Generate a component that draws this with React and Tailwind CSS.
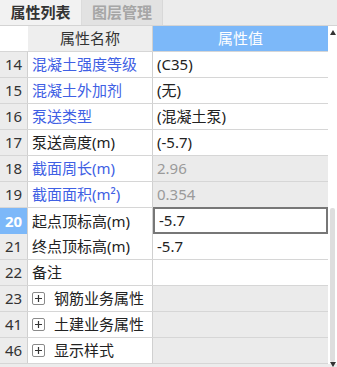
const rows = [
  { no: "14", name: "混凝土强度等级", value: "(C35)", blue: true },
  { no: "15", name: "混凝土外加剂", value: "(无)", blue: true },
  { no: "16", name: "泵送类型", value: "(混凝土泵)", blue: true },
  { no: "17", name: "泵送高度(m)", value: "(-5.7)" },
  { no: "18", name: "截面周长(m)", value: "2.96", blue: true, readonly: true },
  { no: "19", name: "截面面积(m²)", value: "0.354", blue: true, readonly: true },
  { no: "20", name: "起点顶标高(m)", value: "-5.7", selected: true },
  { no: "21", name: "终点顶标高(m)", value: "-5.7" },
  { no: "22", name: "备注", value: "" },
  { no: "23", name: "钢筋业务属性", group: true },
  { no: "41", name: "土建业务属性", group: true },
  { no: "46", name: "显示样式", group: true },
];

const PlusBox = () => (
  <span className="flex h-[13px] w-[13px] items-center justify-center rounded-[2px] border border-[#8a8a8a] bg-white">
    <svg width="9" height="9" viewBox="0 0 9 9">
      <path d="M4.5 1v7M1 4.5h7" stroke="#333" strokeWidth="1.2" />
    </svg>
  </span>
);

const Row = ({ row }) => {
  const nameColor = row.blue ? "text-[#4060e4]" : "text-[#222]";
  const valueBg = row.readonly || row.group ? "bg-[#ebebeb]" : "bg-white";
  return (
    <div className="grid h-[26px] grid-cols-[28px_125px_175px] border-b border-[#d6d6d6]">
      <div
        className={`flex items-center justify-center border-r border-[#d0d0d0] ${
          row.selected ? "bg-[#7cb8f9] font-bold text-white" : "bg-[#ececec] text-[#333]"
        }`}
      >
        {row.no}
      </div>
      <div className={`flex items-center gap-[9px] border-r border-[#d0d0d0] bg-white pl-[4px] ${nameColor}`}>
        {row.group && <PlusBox />}
        <span>{row.name}</span>
      </div>
      <div
        className={`flex items-center pl-[4px] ${
          row.selected ? "border-2 border-[#777] bg-white -mt-[1px] h-[27px] pl-[3px]" : valueBg
        } ${row.readonly ? "text-[#9a9a9a]" : "text-[#222]"}`}
      >
        {row.value}
      </div>
    </div>
  );
};

export default function App() {
  return (
    <div
      className="relative h-[367px] w-[337px] overflow-hidden bg-[#ececec] text-[15px] leading-none"
      style={{ fontFamily: '"Noto Sans", "Noto Sans CJK SC", sans-serif' }}
    >
      <div className="flex h-[26px] border-b border-[#d4d4d4] bg-[#ececec]">
        <div className="flex w-[82px] items-center justify-center border-r border-[#dcdcdc] bg-[#f2f2f2] font-bold text-[#333]">
          属性列表
        </div>
        <div className="flex w-[81px] items-center justify-center border-r border-[#d8d8d8] bg-[#e2e2e2] font-bold text-[#a6a6a6]">
          图层管理
        </div>
      </div>
      <div className="flex">
        <div className="w-[328px]">
          <div className="grid h-[26px] grid-cols-[28px_125px_175px] border-b border-[#d6d6d6]">
            <div className="bg-white" />
            <div className="flex items-center justify-center border-r border-[#d0d0d0] bg-[#eeeeee] text-[#333]">
              属性名称
            </div>
            <div className="flex items-center justify-center bg-[#7cb8f9] text-white">属性值</div>
          </div>
          {rows.map((r) => (
            <Row key={r.no} row={r} />
          ))}
        </div>
        <div className="relative flex-1 bg-white">
          <svg className="absolute left-[2px] top-[4px]" width="6" height="5" viewBox="0 0 6 5">
            <path d="M3 0L6 5H0z" fill="#333" />
          </svg>
          <div className="absolute left-[2px] top-[182px] h-[154px] w-[5px] rounded-[2px] bg-[#dedede]" />
          <svg className="absolute left-[2px] top-[336px]" width="6" height="5" viewBox="0 0 6 5">
            <path d="M0 0H6L3 5z" fill="#333" />
          </svg>
        </div>
      </div>
    </div>
  );
}
